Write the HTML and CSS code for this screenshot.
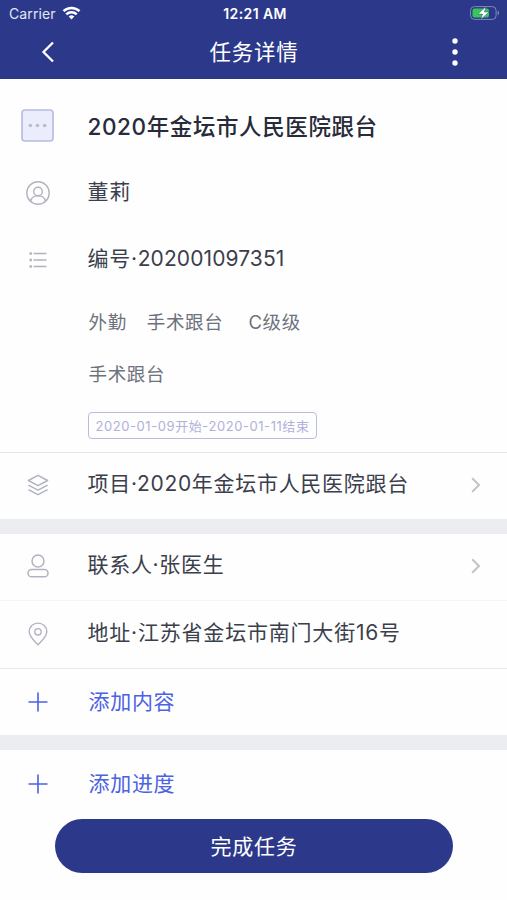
FILE: index.html
```html
<!DOCTYPE html>
<html lang="zh-CN">

<head>
    <meta charset="UTF-8">
    <meta name="viewport" content="width=device-width, initial-scale=1.0">
    <title>任务详情</title>
    <link rel="stylesheet" href="styles.css">
</head>

<body>
    <header>
        <div class="status-bar">
            <div class="carrier">
                <span>Carrier</span>
                <svg width="19" height="14" viewBox="0 0 18 14" fill="none" stroke="#fff" stroke-width="2.5">
                    <path d="M1 5.2a11.4 11.4 0 0 1 16 0" />
                    <path d="M3.8 8.3a7.4 7.4 0 0 1 10.4 0" />
                    <path d="M9 13.4L6.2 10.6a4 4 0 0 1 5.6 0z" fill="#fff" stroke="none" />
                </svg>
            </div>
            <span class="time">12:21 AM</span>
            <svg class="battery" width="31" height="14" viewBox="0 0 31 14">
                <rect x="1.6" y=".6" width="25.5" height="12.8" rx="3.8" fill="none" stroke="#8088bb" />
                <path d="M28.6 4.8c2 .7 2 3.7 0 4.4z" fill="#8088bb" />
                <rect x="3.5" y="2.5" width="16.5" height="9" rx="2" fill="#35c759" />
                <path d="M16.8 .8L9 8h4.6L12 13.2l8-7.2h-4.6z" fill="#fff" stroke="#2c398b" stroke-width=".4" />
            </svg>
        </div>
        <nav class="nav-bar">
            <svg class="back" width="14" height="22" viewBox="0 0 14 22" fill="none" stroke="#fff" stroke-width="2.3">
                <path d="M12 1.5L2.5 11l9.5 9.5" />
            </svg>
            <h1>任务详情</h1>
            <svg class="more" width="6" height="28" viewBox="0 0 6 28" fill="#fff">
                <circle cx="3" cy="3" r="2.7" />
                <circle cx="3" cy="14" r="2.7" />
                <circle cx="3" cy="25" r="2.7" />
            </svg>
        </nav>
    </header>

    <main>
        <section class="task">
            <div class="row row-title">
                <div class="icon">
                    <svg width="33" height="33" viewBox="0 0 33 33">
                        <rect x="1" y="1" width="31" height="31" rx="3" fill="#ebedfc" stroke="#b6bbe2" stroke-width="1.6" />
                        <g fill="#b9bbcf">
                            <circle cx="9.3" cy="16.5" r="1.8" />
                            <circle cx="16.5" cy="16.5" r="1.8" />
                            <circle cx="23.7" cy="16.5" r="1.8" />
                        </g>
                    </svg>
                </div>
                <h2>2020年金坛市人民医院跟台</h2>
            </div>
            <div class="row">
                <div class="icon">
                    <svg width="24" height="24" viewBox="0 0 24 24" fill="none" stroke="#b2b3c0" stroke-width="1.4">
                        <circle cx="12" cy="12" r="11.2" />
                        <circle cx="12" cy="10.5" r="4.3" />
                        <path d="M4.8 20.3c.5-7.3 13.9-7.3 14.4 0" />
                    </svg>
                </div>
                <p>董莉</p>
            </div>
            <div class="row">
                <div class="icon">
                    <svg width="18" height="16" viewBox="0 0 18 16" fill="none" stroke="#b2b3c0" stroke-width="1.3">
                        <path d="M4.5 1.5H17.5M4.5 8H17.5M4.5 14.5H17.5" />
                        <path d="M.5 1.5h2.4M.5 8h2.4M.5 14.5h2.4" stroke-width="2.4" />
                    </svg>
                </div>
                <p>编号·<span class="number">202001097351</span></p>
            </div>
            <div class="tags">
                <span>外勤</span>
                <span>手术跟台</span>
                <span class="level">C级级</span>
            </div>
            <div class="tags tags-second">
                <span>手术跟台</span>
            </div>
            <div class="date">2020-01-09开始-2020-01-11结束</div>
        </section>

        <section>
            <div class="row row-link">
                <div class="icon">
                    <svg width="22" height="22" viewBox="0 0 22 22" fill="none" stroke="#b2b3c0" stroke-width="1.5" stroke-linejoin="round">
                        <path d="M11 1.3L20.6 6.5L11 11.7L1.4 6.5z" />
                        <path d="M1.4 11.2l9.6 5 9.6-5M1.4 15.7l9.6 5 9.6-5" />
                    </svg>
                </div>
                <p>项目·2020年金坛市人民医院跟台</p>
                <svg class="arrow" width="10" height="16" viewBox="0 0 10 16">
                    <path d="M1.2 1.2L8 8l-6.800 6.800" />
                </svg>
            </div>
        </section>

        <section class="group">
            <div class="row row-link">
                <div class="icon">
                    <svg width="22" height="24" viewBox="0 0 22 24" fill="none" stroke="#b2b3c0" stroke-width="1.5">
                        <circle cx="11" cy="7" r="6" />
                        <rect x="1" y="15.5" width="20" height="7.3" rx="3.6" />
                    </svg>
                </div>
                <p>联系人·张医生</p>
                <svg class="arrow" width="10" height="16" viewBox="0 0 10 16">
                    <path d="M1.2 1.2L8 8l-6.800 6.800" />
                </svg>
            </div>
            <div class="row row-address">
                <div class="icon">
                    <svg width="20" height="24" viewBox="0 0 20 24" fill="none" stroke="#b2b3c0" stroke-width="1.4">
                        <path d="M10 22.8C7.8 20.3 1.2 15.3 1.2 9.6a8.8 8.5 0 0 1 17.6 0c0 5.700-6.600 10.700-8.800 13.200z" />
                        <circle cx="10" cy="9.8" r="3.2" />
                    </svg>
                </div>
                <p>地址·江苏省金坛市南门大街16号</p>
            </div>
            <div class="row line add">
                <div class="icon">
                    <svg width="20" height="20" viewBox="0 0 20 20" stroke="#4a62e4" stroke-width="1.6">
                        <path d="M.5 10h19M10 .5v19" />
                    </svg>
                </div>
                <p>添加内容</p>
            </div>
        </section>

        <section class="group">
            <div class="row add">
                <div class="icon">
                    <svg width="20" height="20" viewBox="0 0 20 20" stroke="#4a62e4" stroke-width="1.6">
                        <path d="M.5 10h19M10 .5v19" />
                    </svg>
                </div>
                <p>添加进度</p>
            </div>
        </section>
        <button class="finish">完成任务</button>
    </main>
</body>

</html>
```
FILE: styles.css
```css
* {
    box-sizing: border-box;
}
body {
    margin: 0;
    background: #fefefe;
    color: #3b3f4c;
    font-family: Inter, "Noto Sans CJK SC", sans-serif;
}
h1, h2, p {
    margin: 0;
    font-weight: 400;
}
svg {
    display: block;
}
header {
    height: 79px;
    background: #2c398b;
    color: #fff;
}
.status-bar {
    display: grid;
    grid-template-columns: 1fr auto 1fr;
    align-items: center;
    height: 27px;
    padding: 0 7px 0 9px;
    font-size: 14px;
    line-height: 26px;
}
.carrier {
    display: flex;
    align-items: center;
    gap: 6px;
    color: #e4e6f5;
    letter-spacing: .1px;
}
.carrier svg {
    margin-top: -2px;
}
.time {
    font-weight: 600;
    font-size: 14px;
    letter-spacing: .4px;
    margin-left: 1px;
}
.battery {
    justify-self: end;
    margin-top: -1px;
}
.nav-bar {
    display: grid;
    grid-template-columns: 1fr auto 1fr;
    align-items: center;
    height: 50px;
    padding: 0 49px 0 41px;
}
.nav-bar h1 {
    font-size: 21.5px;
    letter-spacing: .7px;
    line-height: 50px;
    margin-left: 9px;
}
.more {
    justify-self: end;
}

.task {
    height: 374px;
    padding-top: 13px;
    border-bottom: 1px solid #e6e6ea;
}
.row {
    display: flex;
    align-items: center;
    height: 67px;
}
.icon {
    display: flex;
    justify-content: center;
    width: 75px;
    margin-right: 12.5px;
}
.row p {
    flex: 1;
    font-size: 21px;
    letter-spacing: .7px;
    line-height: 30px;
    padding-bottom: 2px;
    white-space: nowrap;
}
.number {
    letter-spacing: .1px;
}
.row-title {
    padding-bottom: 1px;
}
.row-title h2 {
    font-size: 22.5px;
    font-weight: 500;
    color: #272b3a;
    letter-spacing: .6px;
    white-space: nowrap;
}
.arrow {
    margin-right: 26px;
    fill: none;
    stroke: #c3c3c7;
    stroke-width: 2;
}
.tags {
    display: flex;
    gap: 20px;
    padding: 15px 0 0 88.5px;
    color: #6e727c;
    font-size: 18.5px;
    letter-spacing: .65px;
    line-height: 29px;
}
.level {
    margin-left: 5px;
}
.tags-second {
    padding-top: 23px;
}
.date {
    width: 229px;
    height: 27px;
    margin: 23px 0 0 88px;
    border: 1.5px solid #b9bbe0;
    border-radius: 4px;
    color: #b0b1da;
    font-size: 13px;
    letter-spacing: .57px;
    line-height: 26px;
    text-align: center;
    white-space: nowrap;
}

.group {
    border-top: 15px solid #ecedf0;
}
.row-link {
    height: 66px;
    padding-bottom: 2px;
}
.row-link p {
    padding-bottom: 3px;
}
.row-address {
    height: 68px;
    border-top: 1px solid #f5f5f7;
    padding-bottom: 2px;
}
.row-address p {
    padding-bottom: 2px;
    letter-spacing: .8px;
}
.line {
    border-top: 1px solid #e9e9ec;
}
.add p {
    color: #4a62e4;
    padding: 0 0 0 1px;
}
.finish {
    display: block;
    width: 398px;
    height: 54px;
    margin: 2px 0 0 55px;
    padding: 0 0 2px;
    border: none;
    border-radius: 27px;
    background: #2c398b;
    color: #fff;
    font-family: inherit;
    font-size: 21px;
    letter-spacing: .7px;
}
```
